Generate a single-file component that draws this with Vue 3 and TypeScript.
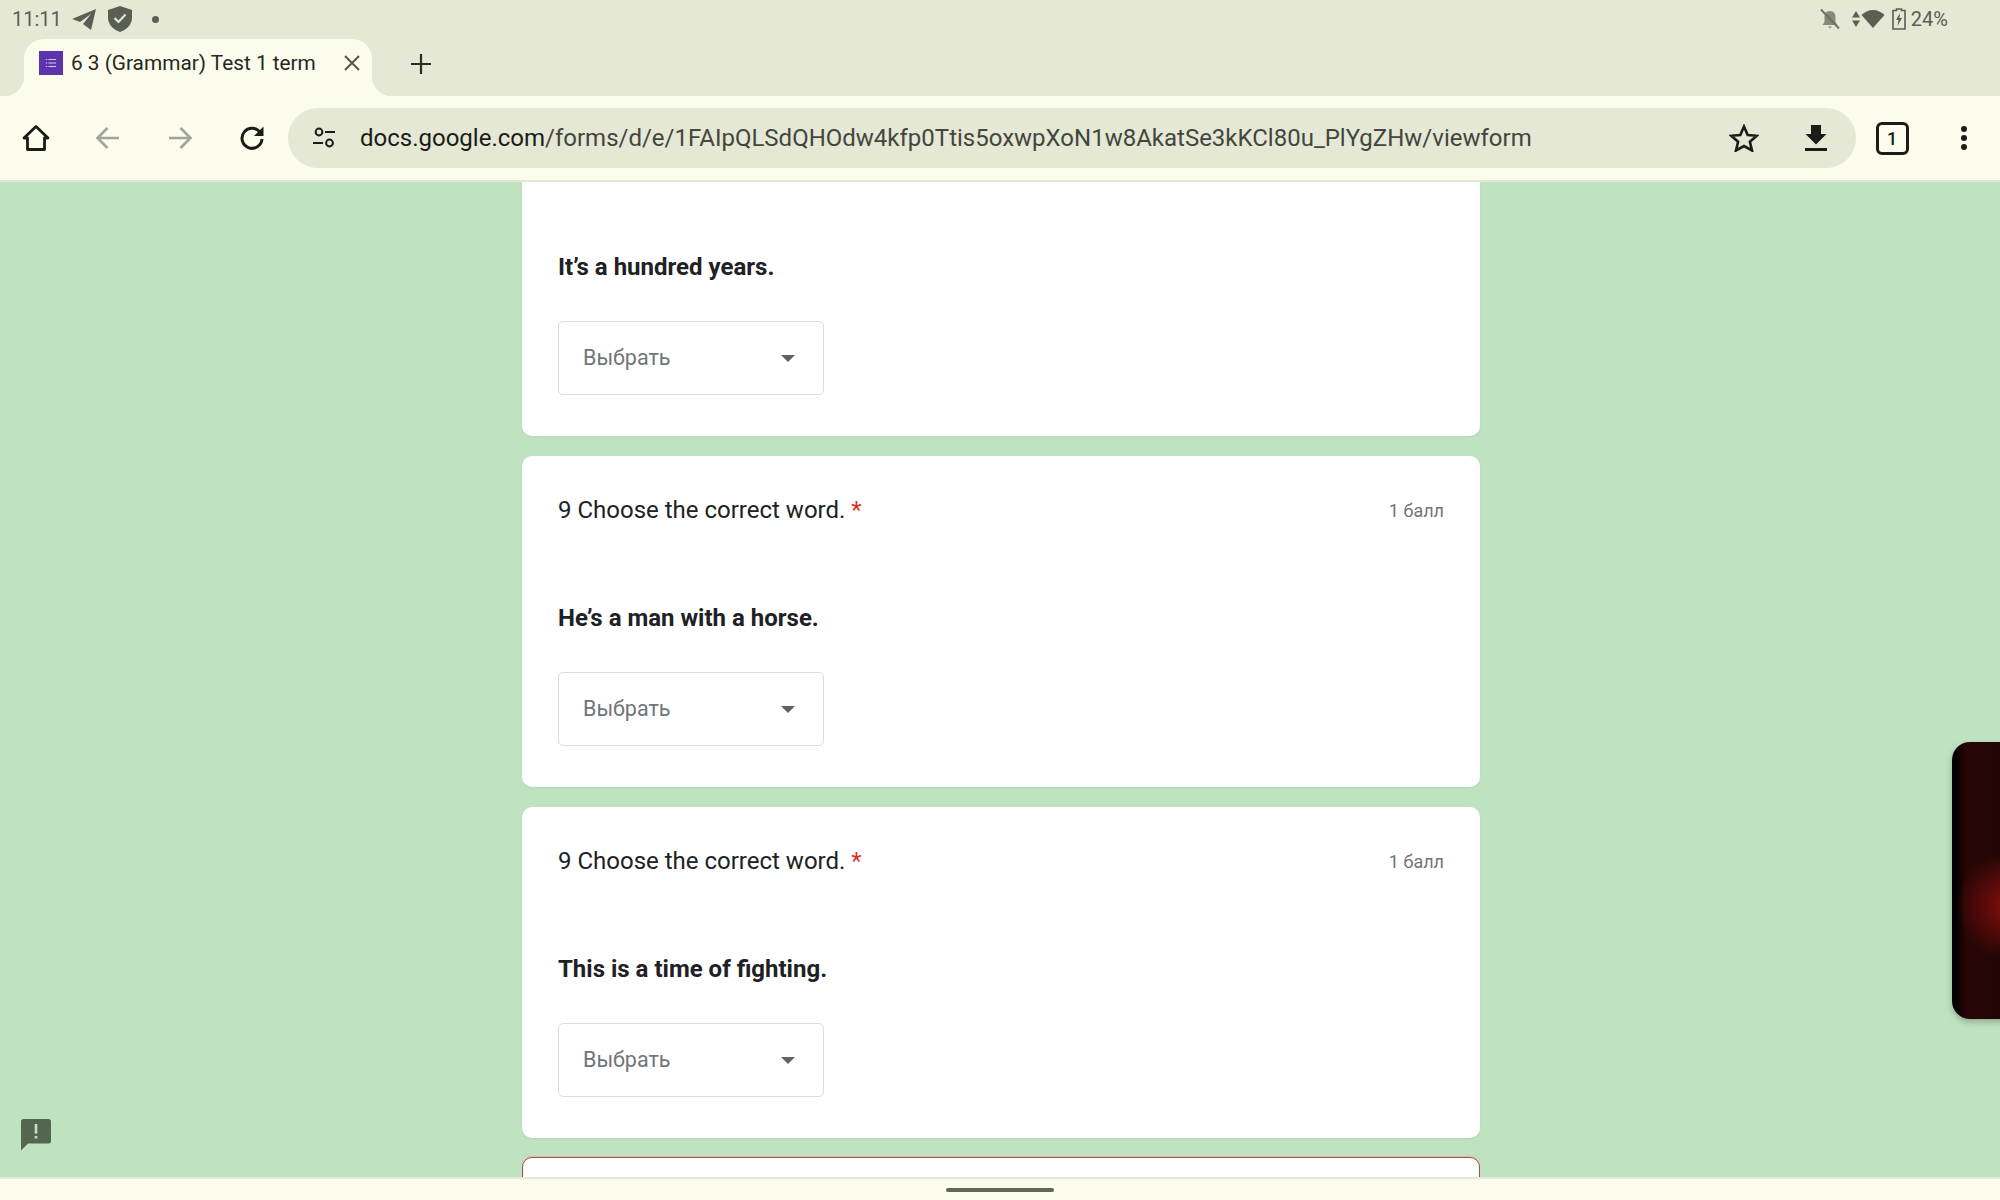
<script setup lang="ts">
interface Question {
  title?: string
  text: string
}

const questions: Question[] = [
  { text: 'It’s a hundred years.' },
  { title: '9 Choose the correct word.', text: 'He’s a man with a horse.' },
  { title: '9 Choose the correct word.', text: 'This is a time of fighting.' }
]
</script>

<template>
  <div class="screen">
    <div class="status">
      <div class="status-left">
        <span class="clock">11:11</span>
        <svg width="26" height="24" viewBox="0 0 26 24"><path d="M25 2 L1 12 L9 15 L20 7 L12 17 L20 23 Z" fill="#5b5e54" /></svg>
        <svg class="shield" width="26" height="28" viewBox="0 0 26 28"><path d="M13 1 L25 5 V13 C25 20 19 25 13 27 C7 25 1 20 1 13 V5 Z" fill="#5b5e54" /><path d="M7.5 13 L11.5 17 L18.5 9.5" fill="none" stroke="#e5e8d5" stroke-width="2.2" /></svg>
        <span class="dot"></span>
      </div>
      <div class="status-right">
        <svg width="22" height="22" viewBox="0 0 22 22"><path d="M11 3 C7 3 5.5 6 5.5 9 V14 L3.5 17 H18.5 L16.5 14 V9 C16.5 6 15 3 11 3 Z M9 18.5 H13 L11 20.5 Z" fill="#85887c" /><path d="M2 1.5 L20 20.5" stroke="#6e7166" stroke-width="2" /></svg>
        <svg class="updown" width="10" height="18" viewBox="0 0 10 18"><path d="M5 1 L9 7.5 H1 Z M5 17 L1 10.5 H9 Z" fill="#5b5e54" /></svg>
        <svg width="24" height="20" viewBox="0 0 24 20"><path d="M12 19 L0.5 6 C3.5 3 7.5 1 12 1 C16.5 1 20.5 3 23.5 6 Z" fill="#5b5e54" /></svg>
        <svg class="battery" width="14" height="22" viewBox="0 0 14 22"><path d="M4.5 1 H9.5 V2.5 H13 V21 H1 V2.5 H4.5 Z" fill="none" stroke="#5b5e54" stroke-width="1.6" /><path d="M8 5 L4 12 H6.5 L5.5 18 L10 10 H7.5 Z" fill="#5b5e54" /></svg>
        <span class="percent">24%</span>
      </div>
    </div>

    <div class="tabstrip">
      <div class="tab">
        <span class="favicon">
          <svg width="12" height="12" viewBox="0 0 14 14"><path d="M1 3 H2.5 M4 3 H13 M1 7 H2.5 M4 7 H13 M1 11 H2.5 M4 11 H13" stroke="#d8cff0" stroke-width="1.2" /></svg>
        </span>
        <span class="tab-title">6 3 (Grammar) Test 1 term</span>
        <svg class="tab-close" width="16" height="16" viewBox="0 0 16 16"><path d="M1 1 L15 15 M15 1 L1 15" stroke="#55574f" stroke-width="2" /></svg>
      </div>
      <svg class="tab-new" width="20" height="20" viewBox="0 0 20 20"><path d="M10 0 V20 M0 10 H20" stroke="#2a2c26" stroke-width="2.2" /></svg>
    </div>

    <div class="toolbar">
      <button class="tool">
        <svg width="28" height="28" viewBox="0 0 28 28"><path d="M14 2.5 L26 14 H22.5 V25.5 H5.5 V14 H2 Z" fill="none" stroke="#1b1c18" stroke-width="2.8" stroke-linejoin="round" /></svg>
      </button>
      <button class="tool">
        <svg width="26" height="26" viewBox="0 0 26 26"><path d="M24 13 H3 M12.5 3 L2.5 13 L12.5 23" fill="none" stroke="#a2a49a" stroke-width="2.6" /></svg>
      </button>
      <button class="tool">
        <svg width="26" height="26" viewBox="0 0 26 26"><path d="M2 13 H23 M13.5 3 L23.5 13 L13.5 23" fill="none" stroke="#a2a49a" stroke-width="2.6" /></svg>
      </button>
      <button class="tool">
        <svg width="26" height="26" viewBox="0 0 26 26"><path d="M21.5 8 A10 10 0 1 0 23 14" fill="none" stroke="#1b1c18" stroke-width="3" /><path d="M24.5 1.5 V11 H15 Z" fill="#1b1c18" /></svg>
      </button>
      <div class="omnibox">
        <svg class="tune" width="24" height="22" viewBox="0 0 24 22"><circle cx="7" cy="5" r="3.4" fill="none" stroke="#1b1c18" stroke-width="2" /><path d="M13 5 H23 M1 16 H11" stroke="#1b1c18" stroke-width="2.2" /><circle cx="17.5" cy="16" r="3.4" fill="none" stroke="#1b1c18" stroke-width="2" /></svg>
        <span class="url"><span class="host">docs.google.com</span>/forms/d/e/1FAIpQLSdQHOdw4kfp0Ttis5oxwpXoN1w8AkatSe3kKCl80u_PlYgZHw/viewform</span>
        <svg class="star" width="30" height="28" viewBox="0 0 30 28"><path d="M15 2.5 L18.7 11 L27.8 11.8 L20.9 17.8 L23 26.5 L15 22 L7 26.5 L9.1 17.8 L2.2 11.8 L11.3 11 Z" fill="none" stroke="#1b1c18" stroke-width="2.6" /></svg>
        <svg class="download" width="22" height="26" viewBox="0 0 22 26"><path d="M6 0 H16 V9 H21.5 L11 19.5 L0.5 9 H6 Z M0 23 H22 V26 H0 Z" fill="#1b1c18" /></svg>
      </div>
      <button class="tool">
        <span class="tab-count">1</span>
      </button>
      <button class="tool">
        <svg width="8" height="26" viewBox="0 0 8 26"><circle cx="4" cy="4" r="3" fill="#1b1c18" /><circle cx="4" cy="13" r="3" fill="#1b1c18" /><circle cx="4" cy="22" r="3" fill="#1b1c18" /></svg>
      </button>
    </div>

    <div class="page">
      <div class="form">
        <section v-for="q in questions" :key="q.text" class="card" :class="{ cut: !q.title }">
          <div v-if="q.title" class="head">
            <span class="title">{{ q.title }} <span class="req">*</span></span>
            <span class="points">1 балл</span>
          </div>
          <p class="text">{{ q.text }}</p>
          <div class="select">
            <span class="placeholder">Выбрать</span>
            <span class="caret"></span>
          </div>
        </section>
        <section class="card error"></section>
      </div>

      <svg class="feedback" width="30" height="32" viewBox="0 0 30 32"><path d="M2.5 0 H27.5 Q30 0 30 2.5 V22 Q30 24.5 27.5 24.5 H7 L0 31.5 V2.5 Q0 0 2.5 0 Z" fill="#546650" /><path d="M13.7 5 H16.3 V14.5 H13.7 Z M13.7 17 H16.3 V19.6 H13.7 Z" fill="#c1e3c3" /></svg>
      <div class="bubble"></div>
    </div>

    <div class="navbar"><span class="handle"></span></div>
  </div>
</template>

<style>
html,
body {
  margin: 0;
  overflow: hidden;
}
</style>

<style scoped>
.screen {
  display: flex;
  flex-direction: column;
  width: 2000px;
  height: 1200px;
  overflow: hidden;
  font-family: Roboto, "Noto Sans", sans-serif;
  background: #bfe3c1;
}

.status {
  display: flex;
  justify-content: space-between;
  align-items: center;
  flex: none;
  height: 38px;
  padding: 0 52px 0 12px;
  color: #5b5e54;
  background: #e5e8d5;
  font-size: 20px;
}

.status-left,
.status-right {
  display: flex;
  align-items: center;
}

.status-left svg {
  margin-left: 9px;
}

.status-left .shield {
  margin-left: 10px;
}

.dot {
  width: 7px;
  height: 7px;
  margin-left: 19px;
  background: #5b5e54;
  border-radius: 50%;
}

.status-right .updown {
  margin-left: 10px;
}

.status-right .battery {
  margin-left: 7px;
}

.percent {
  margin-left: 5px;
}

.tabstrip {
  display: flex;
  align-items: center;
  flex: none;
  height: 58px;
  padding-left: 24px;
  background: #e5e8d5;
}

.tab {
  position: relative;
  display: flex;
  align-items: center;
  width: 348px;
  height: 57px;
  margin-top: 1px;
  padding: 0 0 9px 15px;
  box-sizing: border-box;
  background: #fbfcec;
  border-radius: 20px 20px 0 0;
}

.tab::before,
.tab::after {
  position: absolute;
  bottom: 0;
  width: 20px;
  height: 20px;
  content: "";
}

.tab::before {
  left: -20px;
  background: radial-gradient(circle at 0 0, transparent 20px, #fbfcec 20.5px);
}

.tab::after {
  right: -20px;
  background: radial-gradient(circle at 100% 0, transparent 20px, #fbfcec 20.5px);
}

.favicon {
  display: flex;
  align-items: center;
  justify-content: center;
  flex: none;
  width: 24px;
  height: 24px;
  background: #5b34ad;
}

.tab-title {
  flex: none;
  width: 245px;
  margin-left: 8px;
  color: #26281f;
  font-size: 20.8px;
  white-space: nowrap;
}

.tab-close {
  flex: none;
  margin-left: 28px;
}

.tab-new {
  margin: 0 0 6px 39px;
}

.toolbar {
  display: flex;
  align-items: center;
  flex: none;
  height: 86px;
  box-sizing: border-box;
  background: #fbfcec;
  border-bottom: 2px solid #e5e8d5;
}

.tool {
  display: flex;
  align-items: center;
  justify-content: center;
  flex: none;
  width: 72px;
  height: 72px;
  padding: 0;
  background: none;
  border: 0;
}

.omnibox {
  display: flex;
  align-items: center;
  flex: 1;
  height: 60px;
  padding: 0 29px 0 24px;
  background: #e5e8d5;
  border-radius: 30px;
}

.url {
  flex: 1;
  margin-left: 24px;
  color: #44463d;
  font-size: 24px;
  white-space: nowrap;
}

.host {
  color: #1b1c18;
}

.download {
  margin-left: 46px;
}

.tab-count {
  display: flex;
  align-items: center;
  justify-content: center;
  width: 27px;
  height: 27px;
  color: #1b1c18;
  font-family: Roboto, sans-serif;
  font-size: 18px;
  font-weight: 500;
  border: 3px solid #1b1c18;
  border-radius: 6px;
}

.page {
  position: relative;
  flex: 1;
  overflow: hidden;
}

.form {
  display: flex;
  flex-direction: column;
  gap: 20px;
  width: 958px;
  margin: 0 auto;
  padding-left: 2px;
}

.card {
  flex: none;
  height: 331px;
  padding: 0 36px;
  box-sizing: border-box;
  background: #fff;
  border-radius: 10px;
  box-shadow: 0 1px 2px rgba(60, 64, 67, .08);
}

.card.cut {
  height: 254px;
  padding-top: 71px;
  border-radius: 0 0 10px 10px;
}

.card.error {
  margin-top: -1px;
  border: 1px solid #c0493c;
  box-shadow: 0 -1px 1px rgba(217, 48, 37, .15);
}

.head {
  display: flex;
  justify-content: space-between;
  align-items: center;
  height: 28px;
  padding-top: 40px;
}

.title {
  color: #202124;
  font-size: 24px;
}

.req {
  color: #d93025;
}

.points {
  color: #70757a;
  font-size: 18px;
}

.text {
  margin: 0;
  color: #202124;
  font-size: 24px;
  font-weight: 700;
  line-height: 28px;
}

.card:not(.cut) .text {
  margin-top: 80px;
}

.select {
  display: flex;
  justify-content: space-between;
  align-items: center;
  width: 266px;
  height: 74px;
  margin-top: 40px;
  padding: 0 28px 0 24px;
  box-sizing: border-box;
  color: #70757a;
  font-size: 21.5px;
  border: 1.5px solid #dadce0;
  border-radius: 5px;
}

.placeholder {
  padding-bottom: 2px;
}

.caret {
  width: 0;
  height: 0;
  border-top: 7px solid #5f6368;
  border-right: 7px solid transparent;
  border-left: 7px solid transparent;
}

.feedback {
  position: absolute;
  top: 937px;
  left: 21px;
}

.bubble {
  position: absolute;
  top: 560px;
  left: 1952px;
  width: 60px;
  height: 277px;
  background: radial-gradient(circle 55px at 60px 164px, #8d0f0c, transparent), linear-gradient(90deg, #000 3px, #2a0606 14px, #1d0606);
  border-radius: 18px 0 0 18px;
  box-shadow: 0 3px 6px rgba(60, 70, 50, .35);
}

.navbar {
  display: flex;
  justify-content: center;
  align-items: center;
  flex: none;
  height: 23px;
  background: #fbfcec;
  border-top: 2px solid #e5e8d5;
  box-sizing: border-box;
}

.handle {
  width: 108px;
  height: 4px;
  background: #63655a;
  border-radius: 2px;
}
</style>
